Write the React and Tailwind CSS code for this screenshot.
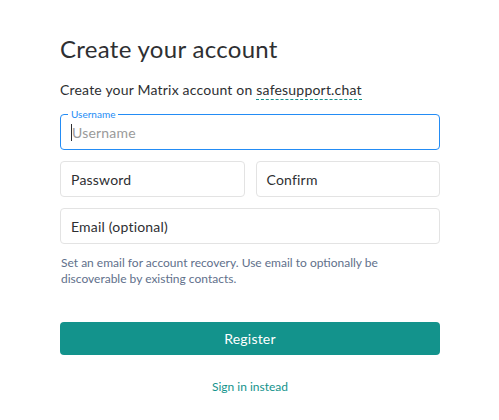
import React from "react";

export default function App() {
  return (
    <div
      className="w-[499px] h-[420px] bg-white pl-[60px] pr-[59px] pt-[34px]"
      style={{ fontFamily: "Lato, 'Noto Sans', sans-serif" }}
    >
      <h1 className="text-[24px] leading-[30px] tracking-[0.3px] text-[#2e2f32] font-normal">Create your account</h1>
      <p className="mt-[16px] text-[14px] leading-[20px] tracking-[0.2px] text-[#2e2f32]">
        Create your Matrix account on{" "}
        <span className="border-b border-dashed border-[#13938c] pb-[1px]">safesupport.chat</span>
      </p>
      <div className="mt-[14px] relative h-[36px] rounded-[4px] border border-[#238cf5] flex items-center pl-[10px]">
        <span className="absolute left-[7px] top-[-7px] bg-white px-[3px] text-[10px] leading-[12px] text-[#238cf5]">
          Username
        </span>
        <span className="w-px h-[17px] bg-[#2e2f32]"></span>
        <span className="text-[14px] tracking-[0.2px] text-[#9a9a9a]">Username</span>
      </div>
      <div className="mt-[11px] flex gap-[11px]">
        <div className="flex-1 h-[36px] rounded-[4px] border border-[#e3e3e3] flex items-center pl-[10px] text-[14px] tracking-[0.2px] text-[#2e2f32]">
          Password
        </div>
        <div className="flex-1 h-[36px] rounded-[4px] border border-[#e3e3e3] flex items-center pl-[10px] text-[14px] tracking-[0.2px] text-[#2e2f32]">
          Confirm
        </div>
      </div>
      <div className="mt-[11px] h-[36px] rounded-[4px] border border-[#e3e3e3] flex items-center pl-[10px] text-[14px] tracking-[0.2px] text-[#2e2f32]">
        Email (optional)
      </div>
      <p className="mt-[11px] text-[12px] leading-[16px] text-[#61708b] pl-px pr-[40px]">
        Set an email for account recovery. Use email to optionally be discoverable by existing contacts.
      </p>
      <button className="mt-[35px] w-full h-[33px] rounded-[4px] bg-[#13938c] text-white text-[14px] tracking-[0.2px]">
        Register
      </button>
      <div className="mt-[24px] text-center text-[12px] leading-[16px] text-[#13938c]">Sign in instead</div>
    </div>
  );
}
